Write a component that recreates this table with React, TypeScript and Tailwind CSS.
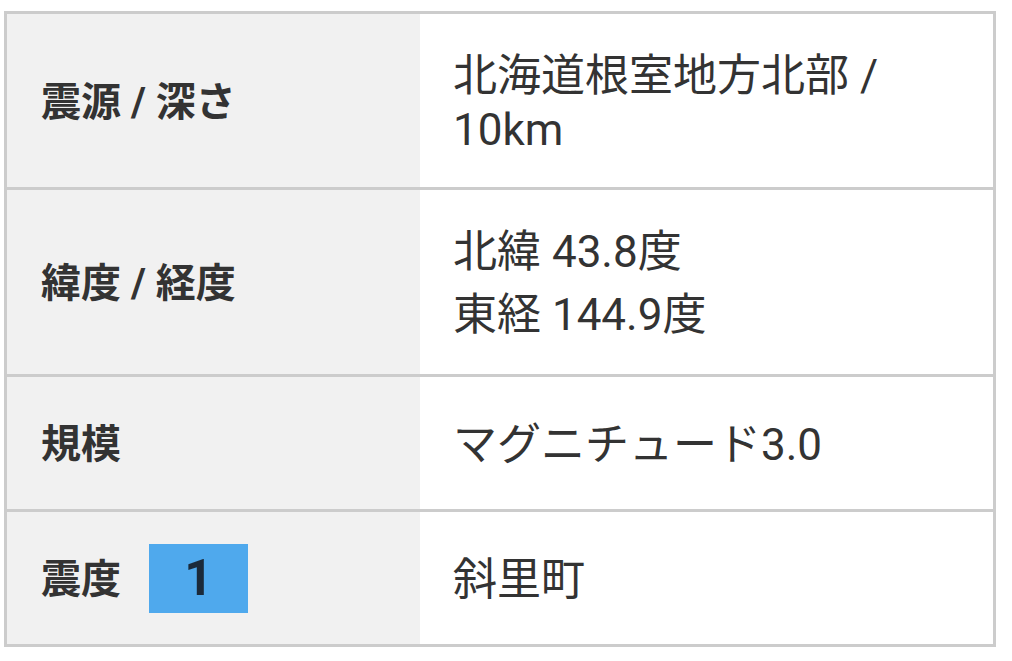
import React from "react";

const font = { fontFamily: 'Roboto, "Noto Sans CJK JP", sans-serif' };

export default function App() {
  return (
    <div className="bg-white w-[1012px] h-[661px] pt-[11px] pl-[4px]" style={font}>
      <div className="w-[992px] border-[3px] border-[#cccccc] flex flex-col text-[#333333]">
        <div className="flex h-[173px]">
          <div className="w-[413px] bg-[#f1f1f1] flex items-center pl-[34px] pt-[4px] text-[40px] font-bold">
            震源 / 深さ
          </div>
          <div className="flex-1 bg-white flex items-center pl-[33px] pt-[4px] text-[44px] leading-[54px]">
            <div>
              北海道根室地方北部 /<br />
              10km
            </div>
          </div>
        </div>
        <div className="flex h-[187px] border-t-[3px] border-[#cccccc]">
          <div className="w-[413px] bg-[#f1f1f1] flex items-center pl-[34px] pt-[4px] text-[40px] font-bold">
            緯度 / 経度
          </div>
          <div className="flex-1 bg-white flex items-center pl-[33px] pt-[4px] text-[44px] leading-[63px]">
            <div>
              北緯 43.8度<br />
              東経 144.9度
            </div>
          </div>
        </div>
        <div className="flex h-[135px] border-t-[3px] border-[#cccccc]">
          <div className="w-[413px] bg-[#f1f1f1] flex items-center pl-[34px] pt-[4px] text-[40px] font-bold">
            規模
          </div>
          <div className="flex-1 bg-white flex items-center pl-[33px] pt-[4px] text-[44px]">
            マグニチュード3.0
          </div>
        </div>
        <div className="flex h-[135px] border-t-[3px] border-[#cccccc]">
          <div className="w-[413px] bg-[#f1f1f1] flex items-center pl-[34px] text-[40px] font-bold">
            <span className="pt-[4px]">震度</span>
            <span className="ml-[28px] w-[99px] h-[69px] bg-[#4fa9ed] flex items-center justify-center text-[#1b2a3a] text-[50px] font-bold leading-none">
              1
            </span>
          </div>
          <div className="flex-1 bg-white flex items-center pl-[33px] pt-[4px] text-[44px]">
            斜里町
          </div>
        </div>
      </div>
    </div>
  );
}
